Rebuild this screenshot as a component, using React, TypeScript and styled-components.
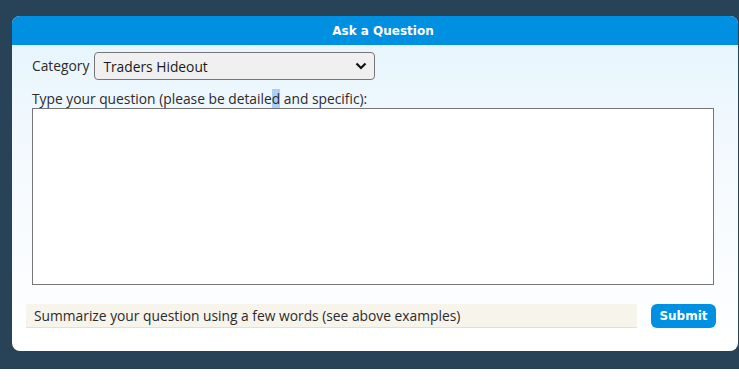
import React from "react";
import styled, { createGlobalStyle } from "styled-components";

const GlobalStyle = createGlobalStyle`
  html, body {
    margin: 0;
    padding: 0;
    background: #ffffff;
  }
`;

const Backdrop = styled.div`
  background: #284357;
  height: 369px;
  padding: 16px 1px 0 12px;
  box-sizing: border-box;
`;

const Panel = styled.div`
  height: 335px;
  border-radius: 8px;
  background: linear-gradient(180deg, #e5f4fd 0%, #f3f9fe 40%, #ffffff 100%);
  display: flex;
  flex-direction: column;
  font-family: "Open Sans", "DejaVu Sans", sans-serif;
  color: #2b2b2b;
`;

const Header = styled.div`
  height: 29px;
  background: #0090e1;
  border-radius: 8px 8px 0 0;
  color: #ffffff;
  font-family: "DejaVu Sans", Verdana, sans-serif;
  font-weight: bold;
  font-size: 12px;
  display: flex;
  align-items: center;
  justify-content: center;
  padding-left: 16px;
`;

const Body = styled.div`
  padding: 7px 24px 0 20px;
  display: flex;
  flex-direction: column;
`;

const Row = styled.div`
  display: flex;
  align-items: center;
  gap: 5px;
`;

const Label = styled.label`
  font-size: 13.8px;
  line-height: 16px;
`;

const SelectBox = styled.div`
  width: 281px;
  height: 28px;
  box-sizing: border-box;
  border: 1px solid #767676;
  border-radius: 4px;
  background: #f0f0f0;
  display: flex;
  align-items: center;
  justify-content: space-between;
  padding: 0 7px 0 8px;
  font-size: 13.8px;
  color: #1a1a1a;
`;

const QuestionLabel = styled(Label)`
  margin-top: 11px;
`;

const Highlight = styled.span`
  background: #a8d1f5;
`;

const TextArea = styled.div`
  height: 175px;
  margin-top: 1px;
  border: 1px solid #767676;
  background: #ffffff;
`;

const Footer = styled.div`
  display: flex;
  align-items: center;
  padding: 19px 0 0 14px;
  gap: 14px;
`;

const SummaryInput = styled.div`
  width: 611px;
  height: 24px;
  box-sizing: border-box;
  background: #f7f4ec;
  border-bottom: 1px solid #e3e0da;
  padding: 0 0 0 8px;
  font-size: 13.8px;
  line-height: 23px;
  color: #2b2b2b;
`;

const SubmitButton = styled.button`
  width: 65px;
  height: 24px;
  border: none;
  border-radius: 6px;
  background: #0090e1;
  color: #ffffff;
  font-family: "DejaVu Sans", Verdana, sans-serif;
  font-weight: bold;
  font-size: 12px;
  padding: 0;
`;

const Chevron = () => (
  <svg width="12" height="8" viewBox="0 0 12 8">
    <path d="M1.5 1.5 L6 6 L10.5 1.5" fill="none" stroke="#111" strokeWidth="2.2" />
  </svg>
);

const App = () => {
  return (
    <>
      <GlobalStyle />
      <Backdrop>
        <Panel>
          <Header>Ask a Question</Header>
          <Body>
            <Row>
              <Label>Category</Label>
              <SelectBox>
                <span>Traders Hideout</span>
                <Chevron />
              </SelectBox>
            </Row>
            <QuestionLabel>
              Type your question (please be detaile<Highlight>d</Highlight> and specific):
            </QuestionLabel>
            <TextArea />
          </Body>
          <Footer>
            <SummaryInput>Summarize your question using a few words (see above examples)</SummaryInput>
            <SubmitButton>Submit</SubmitButton>
          </Footer>
        </Panel>
      </Backdrop>
    </>
  );
};

export default App;
